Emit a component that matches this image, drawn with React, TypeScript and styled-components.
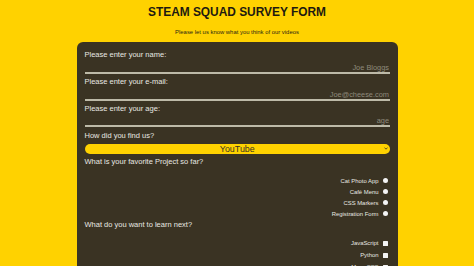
import React from 'react';
import styled, { createGlobalStyle } from 'styled-components';

const GlobalStyle = createGlobalStyle`
  html, body {
    margin: 0;
    padding: 0;
    background-color: #ffd200;
    font-family: 'Liberation Sans', Arial, sans-serif;
  }
`;

const Page = styled.div`
  width: 474px;
  height: 266px;
  overflow: hidden;
  display: flex;
  flex-direction: column;
  align-items: center;
`;

const Title = styled.h1`
  margin: 6px 0 0;
  font-size: 11.9px;
  font-weight: bold;
  color: #1e1a10;
  line-height: 13.6px;
`;

const Subtitle = styled.p`
  margin: 9.4px 0 0;
  font-size: 5.9px;
  line-height: 6.8px;
  color: #2c2614;
`;

const Panel = styled.form`
  margin-top: 6.2px;
  width: 321px;
  box-sizing: border-box;
  padding: 9.4px 7.5px 0 8px;
  background-color: #3a3323;
  border-radius: 6px;
  display: flex;
  flex-direction: column;
  flex: 1;
`;

const Label = styled.label`
  display: block;
  font-size: 7.5px;
  line-height: 8.5px;
  color: #e8e8e2;
`;

const Field = styled.div<{ $gap?: number }>`
  display: flex;
  flex-direction: column;
  margin-bottom: ${({ $gap }) => $gap ?? 0}px;
`;

const TextInput = styled.input`
  box-sizing: border-box;
  height: 14.4px;
  width: 100%;
  padding: 3px 1px 0;
  margin: 0;
  border: none;
  border-bottom: 2px solid #bdbaa8;
  background: transparent;
  text-align: right;
  font-family: inherit;
  font-size: 7.4px;
  color: #ececec;
  outline: none;

  &::placeholder {
    color: #8e8a7b;
  }
`;

const SelectWrap = styled.div`
  position: relative;
  margin-top: 3.4px;
  height: 10px;
  font-size: 0;
`;

const Select = styled.select`
  display: block;
  appearance: none;
  box-sizing: border-box;
  width: 100%;
  height: 10px;
  margin: 0;
  padding: 0;
  border: none;
  border-radius: 5px;
  background-color: #ffd200;
  color: #3a3323;
  font-family: inherit;
  font-size: 8.9px;
  line-height: 10px;
  text-align: center;
  text-align-last: center;
  outline: none;
`;

const Chevron = styled.svg`
  position: absolute;
  right: 2px;
  top: 3.5px;
  width: 4px;
  height: 3px;
  pointer-events: none;
`;

const OptionList = styled.div<{ $top: number; $row: number }>`
  display: flex;
  flex-direction: column;
  margin-top: ${({ $top }) => $top}px;
  margin-bottom: 2px;

  & > label {
    height: ${({ $row }) => $row}px;
  }
`;

const OptionRow = styled.label`
  display: flex;
  align-items: center;
  justify-content: flex-end;
  gap: 4px;
  padding-right: 2.5px;
  font-size: 5.9px;
  color: #e8e8e2;
`;

const Radio = styled.input.attrs({ type: 'radio' })`
  appearance: none;
  margin: 0;
  width: 5px;
  height: 5px;
  border-radius: 50%;
  background: #f4f4f4;
`;

const Check = styled.input.attrs({ type: 'checkbox' })`
  appearance: none;
  margin: 0;
  width: 5px;
  height: 5px;
  border-radius: 0.5px;
  background: #f4f4f4;
`;

const projects = ['Cat Photo App', 'Café Menu', 'CSS Markers', 'Registration Form'];
const topics = ['JavaScript', 'Python', 'More CSS'];

export default function App() {
  return (
    <Page>
      <GlobalStyle />
      <Title>STEAM SQUAD SURVEY FORM</Title>
      <Subtitle>Please let us know what you think of our videos</Subtitle>
      <Panel>
        <Field $gap={3.7}>
          <Label htmlFor="name">Please enter your name:</Label>
          <TextInput id="name" placeholder="Joe Bloggs" />
        </Field>
        <Field $gap={3.7}>
          <Label htmlFor="email">Please enter your e-mail:</Label>
          <TextInput id="email" placeholder="Joe@cheese.com" />
        </Field>
        <Field $gap={4.4}>
          <Label htmlFor="age">Please enter your age:</Label>
          <TextInput id="age" placeholder="age" />
        </Field>
        <Field $gap={4.7}>
          <Label htmlFor="found">How did you find us?</Label>
          <SelectWrap>
            <Select id="found" defaultValue="youtube">
              <option value="youtube">YouTube</option>
              <option value="friend">A friend</option>
              <option value="other">Other</option>
            </Select>
            <Chevron viewBox="0 0 4 3">
              <path d="M0.5 0.6 L2 2.2 L3.5 0.6" fill="none" stroke="#3a3323" strokeWidth="0.8" />
            </Chevron>
          </SelectWrap>
        </Field>
        <Label>What is your favorite Project so far?</Label>
        <OptionList $top={8.3} $row={11}>
          {projects.map((p) => (
            <OptionRow key={p}>
              {p}
              <Radio name="project" />
            </OptionRow>
          ))}
        </OptionList>
        <Label>What do you want to learn next?</Label>
        <OptionList $top={7.4} $row={12}>
          {topics.map((t) => (
            <OptionRow key={t}>
              {t}
              <Check />
            </OptionRow>
          ))}
        </OptionList>
      </Panel>
    </Page>
  );
}
